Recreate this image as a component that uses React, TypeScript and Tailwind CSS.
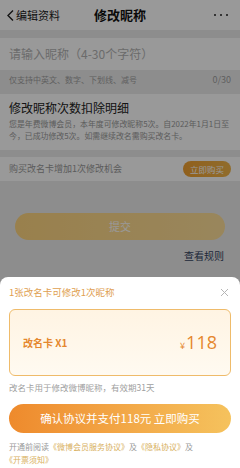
import React from "react";

const font = { fontFamily: '"Noto Sans CJK SC", "Noto Sans", sans-serif' };

export default function App() {
  return (
    <div className="relative w-[240px] h-[468px] overflow-hidden bg-[#ececec]" style={font}>
      {/* underlying page */}
      <div className="flex flex-col">
        <div className="h-[30px] bg-white flex items-center px-[6px] relative">
          <div className="flex items-center text-[#222] text-[11px]">
            <svg width="9" height="13" viewBox="0 0 9 13" className="mr-[1px]">
              <path d="M7 1.5 L2 6.5 L7 11.5" stroke="#222" strokeWidth="1.4" fill="none" />
            </svg>
            <span>编辑资料</span>
          </div>
          <div className="absolute left-0 right-0 top-0 h-[30px] flex items-center justify-center text-[13px] font-bold text-[#111] pointer-events-none">
            修改昵称
          </div>
          <div className="ml-auto flex gap-[4px] mr-[6px]">
            <span className="w-[2px] h-[2px] rounded-full bg-[#222]" />
            <span className="w-[2px] h-[2px] rounded-full bg-[#222]" />
            <span className="w-[2px] h-[2px] rounded-full bg-[#222]" />
          </div>
        </div>
        <div className="h-[8px]" />
        <div className="bg-white h-[32px] flex items-center px-[9px] text-[12px] text-[#b3b3b3]">
          请输入昵称（4-30个字符）
        </div>
        <div className="flex items-center justify-between px-[9px] h-[20px] text-[8px] text-[#a0a0a0]">
          <span>仅支持中英文、数字、下划线、减号</span>
          <span className="text-[9px]">0/30</span>
        </div>
        <div className="h-[4px]" />
        <div className="bg-white px-[9px] pt-[6px] pb-[8px]">
          <div className="text-[12px] text-[#222] leading-[16px]">修改昵称次数扣除明细</div>
          <div className="text-[7.9px] text-[#999] leading-[12px] mt-[2px] whitespace-nowrap">
            您是年费微博会员，本年度可修改昵称5次。自2022年1月1日至
            <br />
            今，已成功修改5次。如需继续改名需购买改名卡。
          </div>
        </div>
        <div className="h-[7px]" />
        <div className="bg-white h-[24px] flex items-center justify-between px-[9px]">
          <span className="text-[9px] text-[#999]">购买改名卡增加1次修改机会</span>
          <span className="h-[16px] px-[7px] rounded-full bg-gradient-to-r from-[#f0a030] to-[#f0b448] text-white text-[8.5px] flex items-center">
            立即购买
          </span>
        </div>
        <div className="mt-[32px] mx-[15px] h-[27px] rounded-full bg-gradient-to-r from-[#ffd680] to-[#ffe09a] flex items-center justify-center text-white text-[11px]">
          提交
        </div>
        <div className="mt-[8px] mr-[16px] text-right text-[10px] text-[#33415e]">查看规则</div>
      </div>

      {/* overlay */}
      <div className="absolute inset-0 bg-[rgba(0,0,0,0.4)]" />

      {/* bottom sheet */}
      <div className="absolute left-0 right-0 bottom-0 h-[191px] bg-white rounded-t-[8px] px-[9px]">
        <div className="flex items-center justify-between h-[30px]">
          <span className="text-[9.5px] text-[#e0a050]">1张改名卡可修改1次昵称</span>
          <svg width="9" height="9" viewBox="0 0 9 9" className="mr-[2px]">
            <path d="M1 1 L8 8 M8 1 L1 8" stroke="#b5b5b5" strokeWidth="1" />
          </svg>
        </div>
        <div className="mt-[2px] h-[67px] rounded-[6px] border border-[#efbb6a] bg-gradient-to-b from-[#fff4e3] to-[#fffaf1] flex items-center justify-between px-[13px]">
          <span className="text-[10px] font-bold text-[#e5872e]">改名卡 X1</span>
          <span className="flex items-baseline text-[#e5872e]">
            <span className="text-[9px] mr-[1px]">¥</span>
            <span className="text-[18px] leading-none" style={{ fontFamily: '"Open Sans", sans-serif' }}>118</span>
          </span>
        </div>
        <div className="mt-[5px] text-[8.5px] text-[#a0a0a0]">改名卡用于修改微博昵称，有效期31天</div>
        <div className="mt-[10px] h-[29px] rounded-full bg-gradient-to-r from-[#ee8a2c] to-[#f5c25d] flex items-center justify-center text-white text-[11.5px]">
          确认协议并支付118元 立即购买
        </div>
        <div className="mt-[7px] text-[8px] leading-[13px] text-[#999]">
          开通前阅读<span className="text-[#d8b060]">《微博会员服务协议》</span>及<span className="text-[#d8b060]">《隐私协议》</span>及
          <br />
          <span className="text-[#d8b060] -ml-[4px]">《开票须知》</span>
        </div>
      </div>
    </div>
  );
}
